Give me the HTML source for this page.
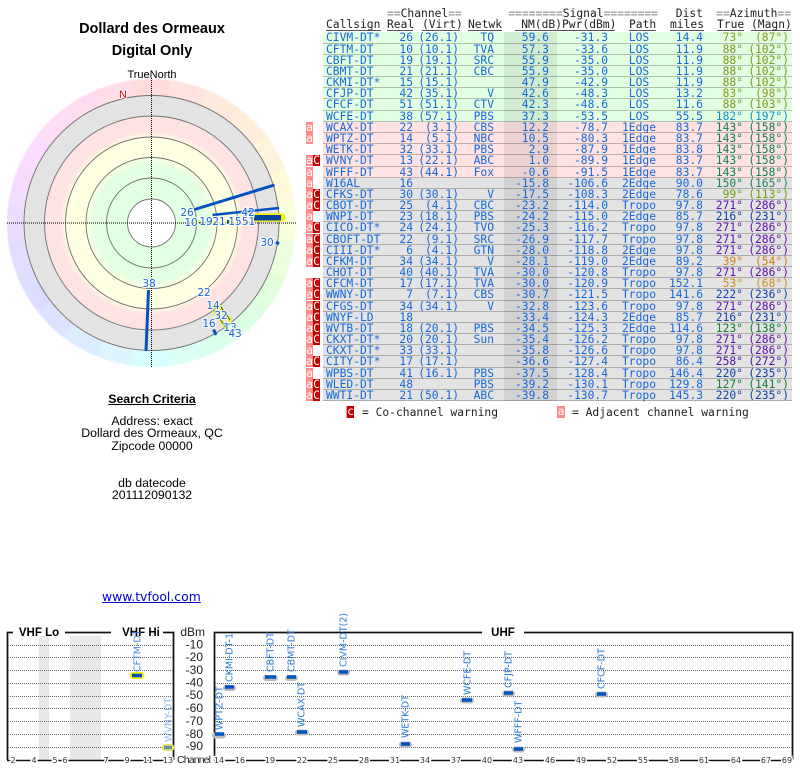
<!DOCTYPE html>
<html><head><meta charset="utf-8"><title>Dollard des Ormeaux</title>
<style>
html,body{margin:0;padding:0;background:#fff;width:800px;height:768px;overflow:hidden}
#p{position:relative;width:800px;height:768px;overflow:hidden;font-family:"Liberation Sans",sans-serif;color:#000}
.c{position:absolute;left:0;width:304px;text-align:center;white-space:nowrap}
.t{font-weight:bold;font-size:14.5px;line-height:18px}
.s{font-size:12.3px;line-height:12px}
#tb{position:absolute;left:0;top:0;width:800px;height:430px;filter:blur(.25px)}
#tb,#tb *{font-family:"DejaVu Sans Mono",monospace;font-size:11.3px;line-height:11px;white-space:pre}
.h{position:absolute;color:#222;text-align:right}
.h i{font-style:normal;color:#a0a0a0;font-weight:bold}
.u{position:absolute;top:19px;height:11px;border-bottom:1px solid #555;color:#222;line-height:11px;text-align:right}
.r{position:absolute;left:323px;width:469px;box-sizing:border-box;color:#1468dc}
.r:before{content:"";position:absolute;left:181px;width:53px;top:0;bottom:0;background:rgba(0,0,0,.075)}
.r:after{content:"";position:absolute;left:0;right:0;bottom:0;height:1px;background:rgba(0,0,0,.24)}
.r span{position:absolute;top:0;text-align:right}
.g{background:#e2ffe2}.p{background:#ffe2e2}.y{background:#e3e3e3}
.r span:nth-child(1){left:3px;text-align:left}
.r span:nth-child(2){right:379px}
.r span:nth-child(3){right:333px}
.r span:nth-child(4){right:298px}
.r span:nth-child(5){right:243px}
.r span:nth-child(6){right:184px}
.r span:nth-child(7){left:290px;width:52px;text-align:center}
.r span:nth-child(8){right:89px}
.r span:nth-child(9){right:49px;color:var(--a)}
.r span:nth-child(10){right:3px;color:var(--a)}
.fa,.fc{position:absolute;width:7px;height:11px;color:#fff;text-align:center;line-height:11px}
.fa{left:306px;background:#ff8a8a}
.fc{left:313px;background:#c40000}
</style></head><body><div id="p">
<div class="c t" style="top:20px">Dollard des Ormeaux</div>
<div class="c t" style="top:42px">Digital Only</div>
<div class="c s" style="top:69px;font-size:11px">TrueNorth</div>

<div style="position:absolute;left:7px;top:79px;width:289px;height:288px;border-radius:50%;filter:blur(.4px);background:conic-gradient(from -7.5deg,#ffdcdc 0 15deg,#ffe3dc 0 30deg,#ffe9dc 0 45deg,#ffeedc 0 60deg,#fff3dc 0 75deg,#fdf9da 0 90deg,#f5ffdc 0 105deg,#ecffdc 0 120deg,#e2ffdc 0 135deg,#dcffe2 0 150deg,#dcffec 0 165deg,#dcfff5 0 180deg,#d8fdff 0 195deg,#dcf5ff 0 210deg,#dcecff 0 225deg,#dce2ff 0 240deg,#dcdcff 0 255deg,#e2dcff 0 270deg,#ecdcff 0 285deg,#f3dcff 0 300deg,#f9dcff 0 315deg,#ffdcf8 0 330deg,#ffdcf0 0 345deg,#ffdce6 0 360deg)"></div>
<svg width="304" height="300" viewBox="0 70 304 300" style="position:absolute;left:0;top:70px;filter:blur(.3px)" xmlns="http://www.w3.org/2000/svg">
<defs><radialGradient id="b" gradientUnits="userSpaceOnUse" cx="151.5" cy="223" r="128">
<stop offset=".19" stop-color="#fff"/><stop offset=".19" stop-color="#e2ffe2"/><stop offset=".45" stop-color="#e2ffe2"/><stop offset=".52" stop-color="#ffffe2"/><stop offset=".66" stop-color="#ffffe2"/><stop offset=".72" stop-color="#ffe2e2"/><stop offset=".825" stop-color="#ffe2e2"/><stop offset=".84" stop-color="#e3e3e3"/><stop offset="1" stop-color="#e3e3e3"/></radialGradient></defs>
<circle cx="151.5" cy="223" r="128" fill="url(#b)"/>
<g fill="none" stroke="#707070" stroke-width=".9"><circle cx="151.5" cy="223" r="24"/><circle cx="151.5" cy="223" r="45"/><circle cx="151.5" cy="223" r="65.5"/><circle cx="151.5" cy="223" r="86"/><circle cx="151.5" cy="223" r="107"/><circle cx="151.5" cy="223" r="127.5"/></g>
<g stroke="#000" stroke-width="1" stroke-dasharray="1 1"><path d="M151.5 78V367M7 223H296"/></g>
<g stroke-linecap="round" fill="none">
<path d="M256 217.500H281" stroke="#f4f000" stroke-width="8.500"/>
<path d="M212 308L227 329M220 307L230 320" stroke="#f4f000" stroke-width="3.500"/>
<path d="M196 222H199M212 223H214M228 222H229" stroke="#f4f000" stroke-width="3.500"/>
</g>
<g fill="none" stroke="#0052bf" stroke-linecap="butt">
<path d="M194.5 209.5L274.500 185" stroke-width="3"/>
<path d="M212.500 215L279 208" stroke-width="2.500"/>
<path d="M254 216H281M254 218H281M254 219.500H281" stroke-width="2" stroke="#04469f"/>
<path d="M148.500 290L146 351" stroke-width="3"/>
<path d="M213.500 329.500L216 335" stroke-width="3"/>
<path d="M276 242L279 244" stroke-width="3"/>
<path d="M213 309L227 329M221 307L230 320" stroke-width="1"/>
<path d="M200 222V224M228 220V224" stroke-width="2"/>
</g>
<g font-family="'DejaVu Sans',sans-serif" font-size="10.500" fill="#1668d8" stroke="#fff" stroke-width="2.400" stroke-opacity=".75" paint-order="stroke" text-anchor="middle">
<text x="187" y="216">26</text><text x="191" y="226">10</text><text x="206" y="225">19</text><text x="219" y="225">21</text><text x="235" y="225">15</text><text x="248.500" y="225">51</text><text x="248" y="216">42</text><text x="267" y="246">30</text><text x="149" y="287">38</text><text x="204" y="296">22</text><text x="213" y="309">14</text><text x="221" y="319">32</text><text x="230" y="331">13</text><text x="235" y="337">43</text><text x="209" y="327">16</text>
</g>
<text x="123" y="98" text-anchor="middle" font-size="11" fill="#d81010" stroke="#fff" stroke-width="2" stroke-opacity=".7" paint-order="stroke">N</text>
</svg>

<div class="c s" style="top:393px;font-weight:bold;text-decoration:underline">Search Criteria</div>
<div class="c s" style="top:415px">Address: exact</div>
<div class="c s" style="top:427px">Dollard des Ormeaux, QC</div>
<div class="c s" style="top:440px">Zipcode 00000</div>
<div class="c s" style="top:477px">db datecode</div>
<div class="c s" style="top:489px">201112090132</div>
<a style="position:absolute;left:102px;top:590px;font:12.400px/14px 'DejaVu Sans',sans-serif;color:#0000c8;text-decoration:underline;white-space:nowrap">www.tvfool.com</a>

<div id="tb">
<div class="h" style="left:387px;top:8px;width:74px"><i>==</i>Channel<i>==</i></div>
<div class="h" style="left:508px;top:8px;width:150px"><i>========</i>Signal<i>========</i></div>
<div class="h" style="left:640px;top:8px;width:63px">Dist</div>
<div class="h" style="left:716px;top:8px;width:75px"><i>==</i>Azimuth<i>==</i></div>
<div class="u" style="left:326px;width:55px;text-align:left">Callsign</div>
<div class="u" style="left:387px;width:26px">Real</div>
<div class="u" style="left:422px;width:38px">(Virt)</div>
<div class="u" style="left:468px;width:34px">Netwk</div>
<div class="u" style="left:515px;width:47px">NM(dB)</div>
<div class="u" style="left:562px;width:53px">Pwr(dBm)</div>
<div class="u" style="left:629px;width:27px">Path</div>
<div class="u" style="left:670px;width:34px">miles</div>
<div class="u" style="left:717px;width:27px">True</div>
<div class="u" style="left:751px;width:40px">(Magn)</div>

<div class="r g" style="top:32px;height:12px;--a:#8a9a20"><span>CIVM-DT*</span><span>26</span><span>(26.1)</span><span>TQ</span><span>59.6</span><span>-31.3</span><span>LOS</span><span>14.4</span><span>73°</span><span>(87°)</span></div>
<div class="r g" style="top:44px;height:11px;--a:#7a9a20"><span>CFTM-DT</span><span>10</span><span>(10.1)</span><span>TVA</span><span>57.3</span><span>-33.6</span><span>LOS</span><span>11.9</span><span>88°</span><span>(102°)</span></div>
<div class="r g" style="top:55px;height:11px;--a:#7a9a20"><span>CBFT-DT</span><span>19</span><span>(19.1)</span><span>SRC</span><span>55.9</span><span>-35.0</span><span>LOS</span><span>11.9</span><span>88°</span><span>(102°)</span></div>
<div class="r g" style="top:66px;height:11px;--a:#7a9a20"><span>CBMT-DT</span><span>21</span><span>(21.1)</span><span>CBC</span><span>55.9</span><span>-35.0</span><span>LOS</span><span>11.9</span><span>88°</span><span>(102°)</span></div>
<div class="r g" style="top:77px;height:11px;--a:#7a9a20"><span>CKMI-DT*</span><span>15</span><span>(15.1)</span><span></span><span>47.9</span><span>-42.9</span><span>LOS</span><span>11.9</span><span>88°</span><span>(102°)</span></div>
<div class="r g" style="top:88px;height:11px;--a:#8a9a20"><span>CFJP-DT</span><span>42</span><span>(35.1)</span><span>V</span><span>42.6</span><span>-48.3</span><span>LOS</span><span>13.2</span><span>83°</span><span>(98°)</span></div>
<div class="r g" style="top:99px;height:12px;--a:#7a9a20"><span>CFCF-DT</span><span>51</span><span>(51.1)</span><span>CTV</span><span>42.3</span><span>-48.6</span><span>LOS</span><span>11.6</span><span>88°</span><span>(103°)</span></div>
<div class="r g" style="top:111px;height:11px;--a:#1090c8"><span>WCFE-DT</span><span>38</span><span>(57.1)</span><span>PBS</span><span>37.3</span><span>-53.5</span><span>LOS</span><span>55.5</span><span>182°</span><span>(197°)</span></div>
<div class="r p" style="top:122px;height:11px;--a:#108050"><span>WCAX-DT</span><span>22</span><span>(3.1)</span><span>CBS</span><span>12.2</span><span>-78.7</span><span>1Edge</span><span>83.7</span><span>143°</span><span>(158°)</span></div>
<div class="r p" style="top:133px;height:11px;--a:#108050"><span>WPTZ-DT</span><span>14</span><span>(5.1)</span><span>NBC</span><span>10.5</span><span>-80.3</span><span>1Edge</span><span>83.7</span><span>143°</span><span>(158°)</span></div>
<div class="r p" style="top:144px;height:11px;--a:#108050"><span>WETK-DT</span><span>32</span><span>(33.1)</span><span>PBS</span><span>2.9</span><span>-87.9</span><span>1Edge</span><span>83.8</span><span>143°</span><span>(158°)</span></div>
<div class="r p" style="top:155px;height:12px;--a:#108050"><span>WVNY-DT</span><span>13</span><span>(22.1)</span><span>ABC</span><span>1.0</span><span>-89.9</span><span>1Edge</span><span>83.7</span><span>143°</span><span>(158°)</span></div>
<div class="r p" style="top:167px;height:11px;--a:#108050"><span>WFFF-DT</span><span>43</span><span>(44.1)</span><span>Fox</span><span>-0.6</span><span>-91.5</span><span>1Edge</span><span>83.7</span><span>143°</span><span>(158°)</span></div>
<div class="r y" style="top:178px;height:11px;--a:#20805a"><span>W16AL</span><span>16</span><span></span><span></span><span>-15.8</span><span>-106.6</span><span>2Edge</span><span>90.0</span><span>150°</span><span>(165°)</span></div>
<div class="r y" style="top:189px;height:11px;--a:#70a010"><span>CFKS-DT</span><span>30</span><span>(30.1)</span><span>V</span><span>-17.5</span><span>-108.3</span><span>2Edge</span><span>78.6</span><span>99°</span><span>(113°)</span></div>
<div class="r y" style="top:200px;height:11px;--a:#6010b0"><span>CBOT-DT</span><span>25</span><span>(4.1)</span><span>CBC</span><span>-23.2</span><span>-114.0</span><span>Tropo</span><span>97.8</span><span>271°</span><span>(286°)</span></div>
<div class="r y" style="top:211px;height:11px;--a:#1040a8"><span>WNPI-DT</span><span>23</span><span>(18.1)</span><span>PBS</span><span>-24.2</span><span>-115.0</span><span>2Edge</span><span>85.7</span><span>216°</span><span>(231°)</span></div>
<div class="r y" style="top:222px;height:12px;--a:#6010b0"><span>CICO-DT*</span><span>24</span><span>(24.1)</span><span>TVO</span><span>-25.3</span><span>-116.2</span><span>Tropo</span><span>97.8</span><span>271°</span><span>(286°)</span></div>
<div class="r y" style="top:234px;height:11px;--a:#6010b0"><span>CBOFT-DT</span><span>22</span><span>(9.1)</span><span>SRC</span><span>-26.9</span><span>-117.7</span><span>Tropo</span><span>97.8</span><span>271°</span><span>(286°)</span></div>
<div class="r y" style="top:245px;height:11px;--a:#6010b0"><span>CIII-DT*</span><span>6</span><span>(4.1)</span><span>GTN</span><span>-28.0</span><span>-118.8</span><span>2Edge</span><span>97.8</span><span>271°</span><span>(286°)</span></div>
<div class="r y" style="top:256px;height:11px;--a:#d08010"><span>CFKM-DT</span><span>34</span><span>(34.1)</span><span>V</span><span>-28.1</span><span>-119.0</span><span>2Edge</span><span>89.2</span><span>39°</span><span>(54°)</span></div>
<div class="r y" style="top:267px;height:11px;--a:#6010b0"><span>CHOT-DT</span><span>40</span><span>(40.1)</span><span>TVA</span><span>-30.0</span><span>-120.8</span><span>Tropo</span><span>97.8</span><span>271°</span><span>(286°)</span></div>
<div class="r y" style="top:278px;height:11px;--a:#d09020"><span>CFCM-DT</span><span>17</span><span>(17.1)</span><span>TVA</span><span>-30.0</span><span>-120.9</span><span>Tropo</span><span>152.1</span><span>53°</span><span>(68°)</span></div>
<div class="r y" style="top:289px;height:12px;--a:#1040b0"><span>WWNY-DT</span><span>7</span><span>(7.1)</span><span>CBS</span><span>-30.7</span><span>-121.5</span><span>Tropo</span><span>141.6</span><span>222°</span><span>(236°)</span></div>
<div class="r y" style="top:301px;height:11px;--a:#6010b0"><span>CFGS-DT</span><span>34</span><span>(34.1)</span><span>V</span><span>-32.8</span><span>-123.6</span><span>Tropo</span><span>97.8</span><span>271°</span><span>(286°)</span></div>
<div class="r y" style="top:312px;height:11px;--a:#1040a8"><span>WNYF-LD</span><span>18</span><span></span><span></span><span>-33.4</span><span>-124.3</span><span>2Edge</span><span>85.7</span><span>216°</span><span>(231°)</span></div>
<div class="r y" style="top:323px;height:11px;--a:#108030"><span>WVTB-DT</span><span>18</span><span>(20.1)</span><span>PBS</span><span>-34.5</span><span>-125.3</span><span>2Edge</span><span>114.6</span><span>123°</span><span>(138°)</span></div>
<div class="r y" style="top:334px;height:11px;--a:#6010b0"><span>CKXT-DT*</span><span>20</span><span>(20.1)</span><span>Sun</span><span>-35.4</span><span>-126.2</span><span>Tropo</span><span>97.8</span><span>271°</span><span>(286°)</span></div>
<div class="r y" style="top:345px;height:11px;--a:#6010b0"><span>CKXT-DT*</span><span>33</span><span>(33.1)</span><span></span><span>-35.8</span><span>-126.6</span><span>Tropo</span><span>97.8</span><span>271°</span><span>(286°)</span></div>
<div class="r y" style="top:356px;height:12px;--a:#5010a0"><span>CITY-DT*</span><span>17</span><span>(17.1)</span><span></span><span>-36.6</span><span>-127.4</span><span>Tropo</span><span>86.4</span><span>258°</span><span>(272°)</span></div>
<div class="r y" style="top:368px;height:11px;--a:#1040a8"><span>WPBS-DT</span><span>41</span><span>(16.1)</span><span>PBS</span><span>-37.5</span><span>-128.4</span><span>Tropo</span><span>146.4</span><span>220°</span><span>(235°)</span></div>
<div class="r y" style="top:379px;height:11px;--a:#108040"><span>WLED-DT</span><span>48</span><span></span><span>PBS</span><span>-39.2</span><span>-130.1</span><span>Tropo</span><span>129.8</span><span>127°</span><span>(141°)</span></div>
<div class="r y" style="top:390px;height:11px;--a:#1040a8"><span>WWTI-DT</span><span>21</span><span>(50.1)</span><span>ABC</span><span>-39.8</span><span>-130.7</span><span>Tropo</span><span>145.3</span><span>220°</span><span>(235°)</span></div>

<div class="fa" style="top:122px">a</div>
<div class="fa" style="top:133px">a</div>
<div class="fa" style="top:155px">a</div><div class="fc" style="top:155px">C</div>
<div class="fa" style="top:167px">a</div>
<div class="fa" style="top:178px">a</div>
<div class="fa" style="top:189px">a</div><div class="fc" style="top:189px">C</div>
<div class="fa" style="top:200px">a</div><div class="fc" style="top:200px">C</div>
<div class="fa" style="top:211px">a</div>
<div class="fa" style="top:222px">a</div><div class="fc" style="top:222px">C</div>
<div class="fa" style="top:234px">a</div><div class="fc" style="top:234px">C</div>
<div class="fa" style="top:245px">a</div><div class="fc" style="top:245px">C</div>
<div class="fa" style="top:256px">a</div><div class="fc" style="top:256px">C</div>
<div class="fa" style="top:278px">a</div><div class="fc" style="top:278px">C</div>
<div class="fa" style="top:289px">a</div><div class="fc" style="top:289px">C</div>
<div class="fa" style="top:301px">a</div><div class="fc" style="top:301px">C</div>
<div class="fa" style="top:312px">a</div><div class="fc" style="top:312px">C</div>
<div class="fa" style="top:323px">a</div><div class="fc" style="top:323px">C</div>
<div class="fa" style="top:334px">a</div><div class="fc" style="top:334px">C</div>
<div class="fa" style="top:345px">a</div>
<div class="fa" style="top:356px">a</div><div class="fc" style="top:356px">C</div>
<div class="fa" style="top:368px">a</div>
<div class="fa" style="top:379px">a</div><div class="fc" style="top:379px">C</div>
<div class="fa" style="top:390px">a</div><div class="fc" style="top:390px">C</div>

<div class="fc" style="left:346px;top:406px;width:8px;height:12px;border-left:1px solid #ff8a8a;box-sizing:border-box">c</div>
<div class="h" style="left:362px;top:407px;text-align:left">= Co-channel warning</div>
<div class="fa" style="left:557px;top:406px;width:8px;height:12px">a</div>
<div class="h" style="left:572px;top:407px;text-align:left">= Adjacent channel warning</div>
</div>

<svg width="800" height="157" viewBox="0 608 800 157" style="position:absolute;left:0;top:608px;filter:blur(.3px)" xmlns="http://www.w3.org/2000/svg">
<rect x="39" y="636" width="10" height="124" fill="#e8e8e8"/><rect x="70" y="636" width="31" height="124" fill="#e8e8e8"/>
<g stroke="#666" stroke-width="1" stroke-dasharray="1 1"><path d="M8 645.500H173M8 657.500H173M8 670.500H173M8 683.500H173M8 696.500H173M8 708.500H173M8 721.500H173M8 734.500H173M8 747.500H173"/><path d="M215 645.500H792M215 657.500H792M215 670.500H792M215 683.500H792M215 696.500H792M215 708.500H792M215 721.500H792M215 734.500H792M215 747.500H792"/></g>
<g fill="none" stroke="#aaa" stroke-width="2.500"><path d="M7.500 760V632.500H13M65 632.500H111M163 632.500H173.500V760"/><path d="M214.500 760V632.500H482M524 632.500H792.500V760"/></g>
<g fill="none" stroke="#111" stroke-width="1.300"><path d="M7.500 760V632.500H13M65 632.500H111M163 632.500H173.500V760"/><path d="M214.500 760V632.500H482M524 632.500H792.500V760"/></g>
<path d="M7 760.500H173.500M214 760.500H793" stroke="#111" stroke-width="1.500"/>
<g font-weight="bold" font-size="11.500" text-anchor="middle"><text x="39" y="636">VHF Lo</text><text x="141" y="636">VHF Hi</text><text x="503" y="636">UHF</text></g>
<g font-size="12" text-anchor="end" fill="#222"><text x="205" y="636">dBm</text><text x="203" y="648.500">-10</text><text x="203" y="661">-20</text><text x="203" y="674">-30</text><text x="203" y="686.500">-40</text><text x="203" y="699">-50</text><text x="203" y="712">-60</text><text x="203" y="725">-70</text><text x="203" y="738">-80</text><text x="203" y="750">-90</text></g>
<text x="177" y="763" font-size="10.500" fill="#222" textLength="34">Channel</text>
<g font-family="'DejaVu Sans',sans-serif" font-size="8" fill="#333" text-anchor="middle" stroke="#fff" stroke-width="3" paint-order="stroke">
<text x="13" y="763">2</text><text x="34" y="763">4</text><text x="55" y="763">5</text><text x="65" y="763">6</text><text x="106" y="763">7</text><text x="127" y="763">9</text><text x="148" y="763">11</text><text x="168" y="763">13</text>
<text x="219" y="763">14</text><text x="240" y="763">16</text><text x="270" y="763">19</text><text x="302" y="763">22</text><text x="333" y="763">25</text><text x="364" y="763">28</text><text x="395" y="763">31</text><text x="425" y="763">34</text><text x="456" y="763">37</text><text x="487" y="763">40</text><text x="518" y="763">43</text><text x="550" y="763">46</text><text x="581" y="763">49</text><text x="612" y="763">52</text><text x="643" y="763">55</text><text x="674" y="763">58</text><text x="704" y="763">61</text><text x="736" y="763">64</text><text x="766" y="763">67</text><text x="787" y="763">69</text>
</g>
<g font-family="'DejaVu Sans',sans-serif" font-size="9.500" fill="#2b7ad8">
<text transform="translate(140.500 672) rotate(-90)" opacity=".85">CFTM-DT</text>
<text transform="translate(171.500 742) rotate(-90)" opacity=".55">WVNY-DT</text>
<text transform="translate(222.500 730) rotate(-90)">WPTZ-DT</text>
<text transform="translate(232.500 682) rotate(-90)">CKMI-DT-1</text>
<text transform="translate(273.500 672) rotate(-90)">CBFT-DT</text>
<text transform="translate(294.500 672) rotate(-90)">CBMT-DT</text>
<text transform="translate(304.500 727) rotate(-90)">WCAX-DT</text>
<text transform="translate(346.500 667) rotate(-90)">CIVM-DT(2)</text>
<text transform="translate(408.500 738) rotate(-90)">WETK-DT</text>
<text transform="translate(470.500 695) rotate(-90)">WCFE-DT</text>
<text transform="translate(511.500 688) rotate(-90)">CFJP-DT</text>
<text transform="translate(521.500 743) rotate(-90)">WFFF-DT</text>
<text transform="translate(604.500 689) rotate(-90)">CFCF-DT</text>
</g>
<g stroke-linecap="round" fill="none">
<path d="M133 675.500H141" stroke="#f4f000" stroke-width="7"/>
<path d="M165 747.500H171" stroke="#e8e070" stroke-width="7"/>
<path d="M215 735.500H223M226 688H233M266 678H275M288 678H295M298 732.500H306M340 672.500H347M402 744.500H409M463 700.500H471M505 693.500H512M515 749.500H522M598 694.500H605" stroke="#bbb" stroke-width="6"/>
</g>
<g stroke="#0052bf" stroke-width="3.500"><path d="M132 675.500H142M215 734H224M225 687H234M265 677H276M287 677H296M297 732H307M339 672H348M401 744H410M462 700H472M504 693H513M514 749H523M597 694H606"/><path d="M164 747.500H172" opacity=".55"/></g>
</svg>
</div></body></html>
